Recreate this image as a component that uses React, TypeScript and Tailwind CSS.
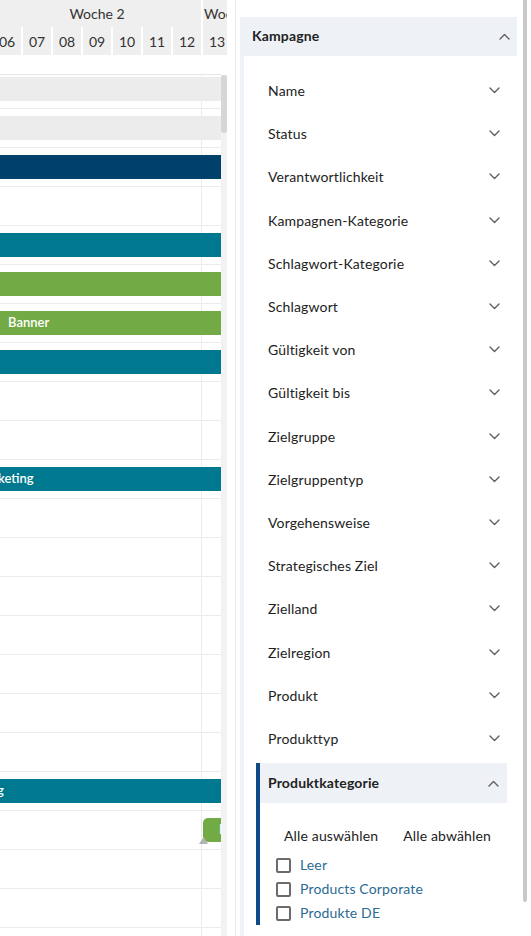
import React from "react";

type Bar = {
  color: string;
  label?: string;
  labelShift?: string;
  offset?: boolean;
} | null;

const bars: Bar[] = [
  { color: "bg-[#ececec]" },
  { color: "bg-[#ececec]" },
  { color: "bg-[#00416b]" },
  null,
  { color: "bg-[#007990]" },
  { color: "bg-[#72aa46]" },
  { color: "bg-[#72aa46]", label: "Banner", labelShift: "pl-[8px]" },
  { color: "bg-[#007990]" },
  null,
  null,
  { color: "bg-[#007990]", label: "keting", labelShift: "ml-[-2px]" },
  null,
  null,
  null,
  null,
  null,
  null,
  null,
  { color: "bg-[#007990]", label: "g", labelShift: "ml-[-3px]" },
  { color: "bg-[#72aa46]", label: "Banner", labelShift: "pl-[16px]", offset: true },
  null,
  null,
  null,
];

const days = ["06", "07", "08", "09", "10", "11", "12", "13"];

const filters = [
  "Name",
  "Status",
  "Verantwortlichkeit",
  "Kampagnen-Kategorie",
  "Schlagwort-Kategorie",
  "Schlagwort",
  "Gültigkeit von",
  "Gültigkeit bis",
  "Zielgruppe",
  "Zielgruppentyp",
  "Vorgehensweise",
  "Strategisches Ziel",
  "Zielland",
  "Zielregion",
  "Produkt",
  "Produkttyp",
];

const categories = ["Leer", "Products Corporate", "Produkte DE"];

function ChevronDown() {
  return (
    <svg width="11" height="7" viewBox="0 0 11 7" fill="none">
      <path d="M1 1l4.5 4.5L10 1" stroke="#5f5f5f" strokeWidth="1.4" strokeLinecap="round" strokeLinejoin="round" />
    </svg>
  );
}

function ChevronUp() {
  return (
    <svg width="11" height="7" viewBox="0 0 11 7" fill="none">
      <path d="M1 6l4.5-4.5L10 6" stroke="#5f5f5f" strokeWidth="1.4" strokeLinecap="round" strokeLinejoin="round" />
    </svg>
  );
}

function GanttRow({ bar, first }: { bar: Bar; first: boolean }) {
  return (
    <div className={`border-b border-[#ebebeb] pb-[7px] ${first ? "pt-[2px]" : "pt-[7px]"}`}>
      <div className="relative flex h-[24px]">
        {bar && bar.offset && <div className="w-[203px] shrink-0" />}
        {bar && (
          <div
            className={`flex flex-1 items-center overflow-hidden whitespace-nowrap text-[13px] font-semibold text-white ${bar.color} ${
              bar.offset ? "rounded-l-[5px]" : ""
            }`}
          >
            {bar.label && <span className={bar.labelShift}>{bar.label}</span>}
          </div>
        )}
        {bar && bar.offset && (
          <svg className="absolute left-[199px] top-[19px]" width="9" height="7" viewBox="0 0 9 7">
            <path d="M4.5 0L9 7H0z" fill="#b4b4b4" />
          </svg>
        )}
      </div>
    </div>
  );
}

export default function App() {
  return (
    <div className="flex h-[936px] w-[531px] overflow-hidden bg-white font-['Lato','Open_Sans',sans-serif] text-[14px] text-[#222]">
      {/* Timeline */}
      <div className="flex w-[227px] shrink-0 flex-col">
        <div className="h-[55px] shrink-0 overflow-hidden bg-[#efefef] text-[#333]">
          <div className="flex h-[27px] ml-[-7px] whitespace-nowrap">
            <div className="flex w-[208px] shrink-0 items-center justify-center">Woche 2</div>
            <div className="w-[2px] shrink-0 bg-white" />
            <div className="flex shrink-0 items-center pl-[1px]">Woche 3</div>
          </div>
          <div className="flex h-[28px] ml-[-7px]">
            {days.map((d, i) => (
              <React.Fragment key={d}>
                {i > 0 && <div className="w-[2px] shrink-0 bg-white" />}
                <div className="flex w-[28px] shrink-0 items-center justify-center">{d}</div>
              </React.Fragment>
            ))}
          </div>
        </div>
        <div className="flex flex-1">
          <div className="w-[221px] shrink-0 overflow-hidden">
            <div className="h-[20px] border-b border-[#e6e6e6]" />
            <div className="bg-[linear-gradient(to_right,transparent_201px,#ebebeb_201px,#ebebeb_202px,transparent_202px)]">
              {bars.map((b, i) => (
                <GanttRow key={i} bar={b} first={i === 0} />
              ))}
            </div>
          </div>
          <div className="flex w-[6px] shrink-0 flex-col">
            <div className="h-[20px] shrink-0" />
            <div className="flex-1 bg-[#f2f2f2]">
              <div className="h-[58px] rounded-[3px] bg-[#d6d6d6]" />
            </div>
          </div>
        </div>
      </div>

      <div className="w-[8px] shrink-0" />
      <div className="w-px shrink-0 bg-[#e8e8e8]" />
      <div className="w-[4px] shrink-0" />

      {/* Filter panel */}
      <div className="w-[277px] shrink-0 pt-[17px] tracking-[0.15px]">
        <div className="flex h-[39px] items-center justify-between bg-[#eef2f7] pl-[12px] pr-[7px]">
          <span className="pb-[2px] font-bold">Kampagne</span>
          <ChevronUp />
        </div>
        <div className="h-[900px] border-l-4 border-[#eef2f7] pl-[12px] pr-[10px] pt-[13px]">
          {filters.map((f) => (
            <div key={f} className="flex h-[43.2px] items-center justify-between border-l-4 border-transparent pl-[8px] pr-[7px]">
              <span>{f}</span>
              <ChevronDown />
            </div>
          ))}
          <div className="mt-[3px] border-l-4 border-[#0e4a87]">
            <div className="flex h-[40px] items-center justify-between bg-[#eef2f7] pl-[8px] pr-[8px]">
              <span className="pb-[2px] font-bold">Produktkategorie</span>
              <ChevronUp />
            </div>
            <div className="pt-[22px]">
              <div className="flex h-[20px] items-center gap-[25px] pl-[24px]">
                <span>Alle auswählen</span>
                <span>Alle abwählen</span>
              </div>
              <div className="mt-[8px]">
                {categories.map((c) => (
                  <div key={c} className="flex h-[24px] items-center gap-[9px] pl-[16px]">
                    <div className="h-[15px] w-[15px] rounded-[2px] border-2 border-[#6b6b6b]" />
                    <span className="pb-[1px] text-[#2a6b93]">{c}</span>
                  </div>
                ))}
              </div>
            </div>
          </div>
        </div>
      </div>

      <div className="w-[6px] shrink-0" />
      <div className="h-[902px] w-[4px] shrink-0 rounded-b-[2px] bg-[#c9c9c9]" />
    </div>
  );
}
